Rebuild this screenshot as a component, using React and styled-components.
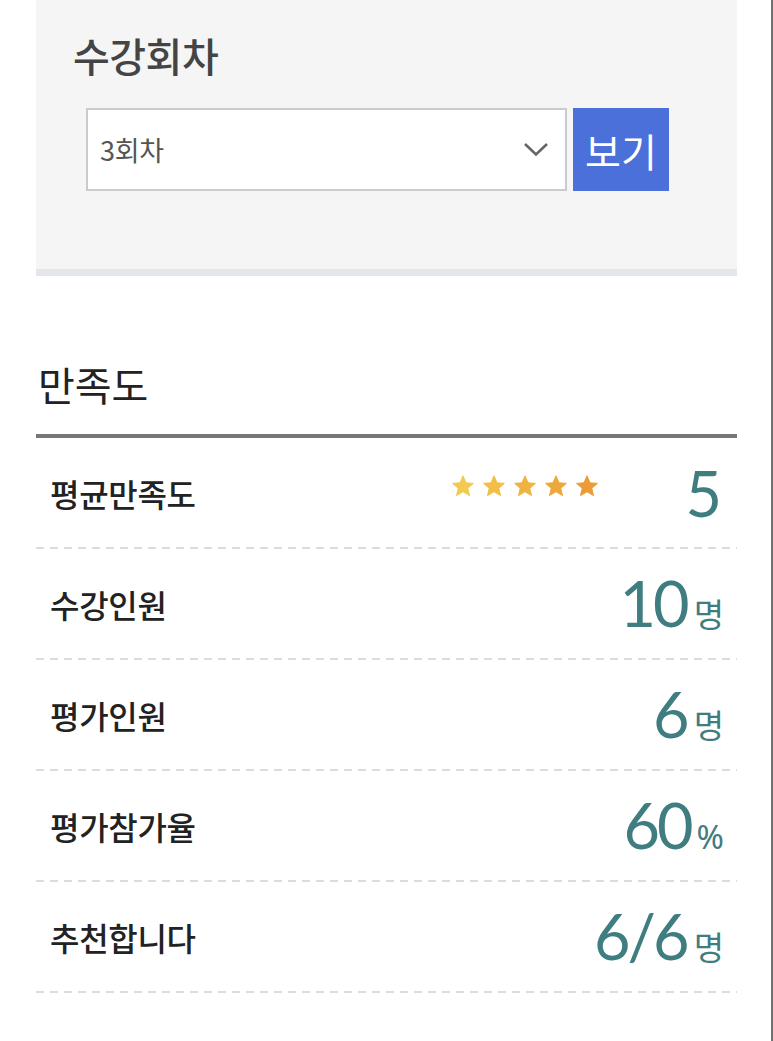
import React from "react";
import styled, { createGlobalStyle } from "styled-components";

const GlobalStyle = createGlobalStyle`
	body {
		margin: 0;
		background: #fff;
		font-family: "Noto Sans CJK KR", "Noto Sans", sans-serif;
	}
	* {
		box-sizing: border-box;
	}
`;

const rows = [
	{ label: "평균만족도", value: "5", stars: 5 },
	{ label: "수강인원", value: "10", unit: "명" },
	{ label: "평가인원", value: "6", unit: "명" },
	{ label: "평가참가율", value: "60", unit: "%" },
	{ label: "추천합니다", value: "6/6", unit: "명" },
];

const starColors = ["#f3ca50", "#f2be47", "#f0b240", "#eea73b", "#ec9b36"];

const Star = ({ color }) => (
	<svg width="24" height="24" viewBox="0 0 24 24">
		<path
			d="M12 1.8l3 7 7.4.6-5.6 4.9 1.7 7.3L12 17.7l-6.5 3.9 1.7-7.3-5.6-4.9 7.4-.6z"
			fill={color}
			stroke={color}
			strokeWidth="1"
			strokeLinejoin="round"
		/>
	</svg>
);

const App = () => {
	return (
		<Page>
			<GlobalStyle />
			<Content>
				<RoundPanel>
					<PanelTitle>수강회차</PanelTitle>
					<PickerRow>
						<Select>
							<span>3회차</span>
							<svg width="26" height="15" viewBox="0 0 26 15">
								<polyline
									points="2,2 13,12.5 24,2"
									fill="none"
									stroke="#666"
									strokeWidth="2.6"
								/>
							</svg>
						</Select>
						<ViewButton>보기</ViewButton>
					</PickerRow>
				</RoundPanel>

				<SectionTitle>만족도</SectionTitle>
				<StatList>
					{rows.map((row) => (
						<StatRow key={row.label}>
							<Label>{row.label}</Label>
							{row.stars && (
								<Stars>
									{starColors.map((c, i) => (
										<Star key={i} color={c} />
									))}
								</Stars>
							)}
							<Value>
								<Number $alone={!row.unit}>{row.value}</Number>
								{row.unit && <Unit $pct={row.unit === "%"}>{row.unit}</Unit>}
							</Value>
						</StatRow>
					))}
				</StatList>
			</Content>
		</Page>
	);
};

const Page = styled.div`
	width: 773px;
	min-height: 1041px;
	border-right: 2px solid #707070;
	padding-left: 36px;
`;

const Content = styled.div`
	width: 701px;
`;

const RoundPanel = styled.div`
	background: #f5f5f6;
	border-bottom: 7px solid #e3e6ea;
	padding: 32px 0 78px 37px;
`;

const PanelTitle = styled.h2`
	margin: 0;
	font-size: 40px;
	font-weight: 500;
	line-height: 46px;
	color: #444;
	letter-spacing: -0.5px;
`;

const PickerRow = styled.div`
	display: flex;
	gap: 6px;
	margin-top: 30px;
	padding-left: 13px;
`;

const Select = styled.div`
	width: 481px;
	height: 83px;
	background: #fff;
	border: 2px solid #cbcbcb;
	display: flex;
	align-items: center;
	justify-content: space-between;
	padding: 0 16px 0 12px;

	span {
		font-size: 27px;
		color: #555;
		letter-spacing: -0.3px;
	}
`;

const ViewButton = styled.button`
	width: 96px;
	height: 83px;
	border: none;
	background: #4b70d9;
	color: #fff;
	font-family: inherit;
	font-size: 39px;
	padding: 0;
`;

const SectionTitle = styled.h2`
	margin: 84px 0 0;
	padding: 0 0 26px 2px;
	font-size: 40px;
	font-weight: 400;
	line-height: 48px;
	color: #222;
`;

const StatList = styled.div`
	border-top: 4px solid #777;
`;

const StatRow = styled.div`
	height: 111px;
	display: flex;
	align-items: center;
	padding: 0 15px 2px 14px;
	background-image: repeating-linear-gradient(
		to right,
		#dcdcdc 0 8px,
		transparent 8px 14px
	);
	background-size: 100% 2px;
	background-position: left bottom;
	background-repeat: no-repeat;
`;

const Label = styled.div`
	flex: 1;
	font-size: 32px;
	font-weight: 500;
	color: #222;
	letter-spacing: -0.3px;
`;

const Stars = styled.div`
	display: flex;
	gap: 7px;
	margin: 0 86px 14px 0;
`;

const Value = styled.div`
	display: flex;
	align-items: baseline;
	color: #3f7d80;
`;

const Number = styled.span`
	font-family: Lato, "Noto Sans", sans-serif;
	font-size: 63px;
	line-height: 1;
	letter-spacing: -3px;
	padding-right: ${(p) => (p.$alone ? "3px" : "0")};
`;

const Unit = styled.span`
	font-size: 33px;
	margin-left: ${(p) => (p.$pct ? "6px" : "7px")};
	margin-right: -2px;
	font-family: ${(p) => (p.$pct ? "\"Noto Sans\", sans-serif" : "inherit")};
`;

export default App;
